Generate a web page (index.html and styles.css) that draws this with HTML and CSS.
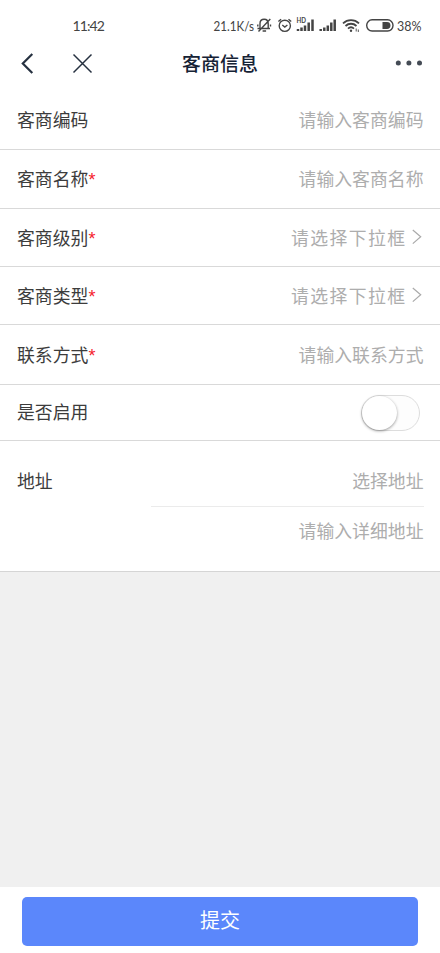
FILE: index.html
```html
<!DOCTYPE html>
<html lang="zh-CN">
<head>
<meta charset="utf-8">
<meta name="viewport" content="width=device-width, initial-scale=1">
<title>客商信息</title>
<link rel="stylesheet" href="styles.css">
</head>
<body>
<div class="screen">
  <div class="status">
    <span class="clock">11:42</span>
    <svg class="indicators" width="212" height="22" viewBox="212 14 212 22">
      <text x="213.500" y="30.500" textLength="40.500" lengthAdjust="spacingAndGlyphs">21.1K/s</text>
      <g class="line">
        <path d="M257.500 28.500h12.500M260 28v-4.500c0-2.500 1.700-4.300 4.200-4.300 2.400 0 4 1.800 4 4.300v5M262.600 31h3.500M258.500 31.500l11.800-12.500M257.800 24.500v2M270.500 24.500v2"/>
        <circle cx="284.800" cy="25.800" r="5.600"/>
        <path d="M282.300 25l2.500 2 2.600-2M278.400 21.600l2.700-2.400M291.200 21.600l-2.700-2.400"/>
      </g>
      <text class="hd" x="296.500" y="23" textLength="9.500" lengthAdjust="spacingAndGlyphs">HD</text>
      <g class="bars">
        <path d="M298 31v-2M301.500 31v-3.500M305 31v-5.500M308.700 31v-8.500M312.500 31v-11.500"/>
        <path d="M320.700 31v-2M324.300 31v-3.500M327.800 31v-5.500M331.300 31v-8.500M334.700 31v-11.500"/>
      </g>
      <g class="waves">
        <path d="M343 23.300c4.600-4.300 11.400-4.300 16 0M345.500 26c3.200-3 7.800-3 11 0M348 28.600c1.800-1.600 4.200-1.600 6 0"/>
        <circle class="solid" cx="351" cy="30.700" r="1.200"/>
      </g>
      <path class="tiny" d="M356.200 28.500v3M358.300 29.500v2.500"/>
      <rect class="battery" x="366.700" y="19.800" width="26.300" height="11.200" rx="5.400"/>
      <path class="solid" d="M382.500 22h4.500a3.400 3.400 0 0 1 0 6.900h-4.500z"/>
      <text x="397" y="30.500" textLength="24.500" lengthAdjust="spacingAndGlyphs">38%</text>
    </svg>
  </div>
  <header class="nav">
    <svg class="nav-left" width="100" height="28" viewBox="0 50 100 28">
      <path class="back" d="M32.300 54l-9.500 9.500 9.500 9.500"/>
      <path class="close" d="M73.500 54.500l18 18M91.500 54.500l-18 18"/>
    </svg>
    <h1>客商信息</h1>
    <svg class="more" width="28" height="8" viewBox="0 0 28 8"><circle cx="3.300" cy="4" r="2.500"/><circle cx="13.900" cy="4" r="2.500"/><circle cx="24.500" cy="4" r="2.500"/></svg>
  </header>
  <main class="form">
    <div class="row"><span>客商编码</span><span class="hint">请输入客商编码</span></div>
    <div class="row name"><span>客商名称<b>*</b></span><span class="hint">请输入客商名称</span></div>
    <div class="row select"><span>客商级别<b>*</b></span><span class="hint">请选择下拉框</span><svg class="chevron" width="10" height="16"><path d="M.8 1l7.900 6.800-7.900 6.800"/></svg></div>
    <div class="row select"><span>客商类型<b>*</b></span><span class="hint">请选择下拉框</span><svg class="chevron" width="10" height="16"><path d="M.8 1l7.900 6.800-7.900 6.800"/></svg></div>
    <div class="row"><span>联系方式<b>*</b></span><span class="hint">请输入联系方式</span></div>
    <div class="row enable"><span>是否启用</span><i class="switch"></i></div>
    <div class="address">
      <span class="address-label">地址</span>
      <div class="address-fields">
        <div class="region hint">选择地址</div>
        <div class="detail hint">请输入详细地址</div>
      </div>
    </div>
  </main>
  <footer class="footer"><button class="submit">提交</button></footer>
</div>
</body>
</html>
```
FILE: styles.css
```css
* { box-sizing: border-box; }
body { margin: 0; background: #f0f0f0; font-family: "Noto Sans CJK SC", sans-serif; color: #3c3c3c; }
svg { display: block; flex: none; }
.screen { width: 440px; height: 953px; display: flex; flex-direction: column; overflow: hidden; }
.status { height: 42px; flex: none; padding: 14px 16px 0 72.500px; display: flex; justify-content: space-between; background: #fff; }
.clock { margin-top: 3px; font: 14px/18px Lato, sans-serif; letter-spacing: -.9px; color: #444; }
.status text { font: 14px Lato, sans-serif; fill: #444; }
.status .hd { font-size: 6.500px; font-weight: 700; }
.line { fill: none; stroke: #444; stroke-width: 1.400; }
.bars { stroke: #444; stroke-width: 2.500; }
.waves { fill: none; stroke: #444; stroke-width: 1.800; }
.tiny { stroke: #555; stroke-width: 1; }
.battery { fill: none; stroke: #444; stroke-width: 1.400; }
.solid { fill: #444; stroke: none; }
.nav { height: 48px; flex: none; padding-right: 17px; display: grid; grid-template-columns: 100px 1fr 83px; align-items: center; background: #fff; }
.nav-left { margin-top: -5px; fill: none; stroke: #263140; }
.back { stroke-width: 2.200; }
.close { stroke-width: 1.500; }
.nav h1 { margin: 0 0 7px; text-align: center; font-size: 19px; line-height: 28px; font-weight: 500; color: #152235; }
.more { justify-self: end; margin-top: -6px; fill: #444b55; }
.form { flex: none; background: #fff; font-size: 17.850px; line-height: 26px; }
.row { height: 60px; padding: 0 16.500px 1px 17px; border-bottom: 1px solid #d9d9d9; display: flex; align-items: center; justify-content: space-between; }
.row b { font: 18px/20px "Liberation Sans", sans-serif; color: #f5222d; }
.row.name { height: 59px; padding-bottom: 2px; }
.row.select { height: 58px; padding: 0 18px 1px 17px; }
.select .hint { margin-left: auto; letter-spacing: 1.400px; }
.chevron { margin: 0 0 1px 5.500px; fill: none; stroke: #aaa; stroke-width: 1.200; }
.row.enable { height: 56px; padding: 0 20px 0 17px; }
.enable span { margin-bottom: 3px; }
.hint { color: #adadad; }
.switch { width: 59px; height: 36px; border: 1px solid #ddd; border-radius: 18px; background: #fdfdfd; }
.switch::before { content: ""; display: block; width: 35px; height: 34px; border-radius: 50%; background: #fff; box-shadow: 0 1px 3px rgba(0, 0, 0, .4); }
.address { height: 131px; padding: 26px 16px 0 17px; border-bottom: 1px solid #d5d5d5; display: flex; justify-content: space-between; }
.address-fields { width: 273px; text-align: right; }
.region { height: 40px; padding-right: .5px; border-bottom: 1px solid #ebebeb; }
.detail { padding: 10px .5px 0 0; }
.footer { height: 66px; flex: none; margin-top: auto; padding: 10px 22px 7px; background: #fff; }
.submit { display: block; width: 396px; height: 49px; padding: 0 0 4px; border: 0; border-radius: 5px; background: #5b87fb; color: #fff; font: 20px/28px "Noto Sans CJK SC", sans-serif; }
```
